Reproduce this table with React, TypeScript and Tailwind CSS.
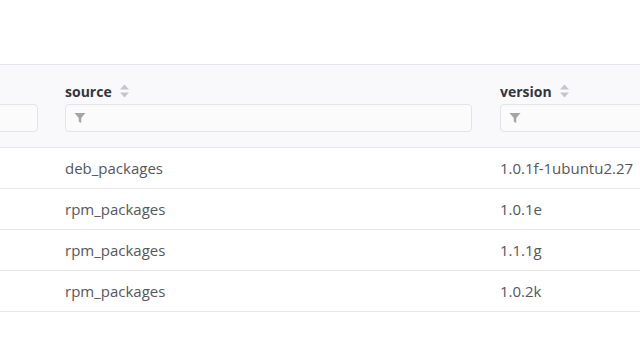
import React from "react";

type Row = {
  source: string;
  version: string;
};

const rows: Row[] = [
  { source: "deb_packages", version: "1.0.1f-1ubuntu2.27" },
  { source: "rpm_packages", version: "1.0.1e" },
  { source: "rpm_packages", version: "1.1.1g" },
  { source: "rpm_packages", version: "1.0.2k" },
];

const SortIcon = () => (
  <svg width="11" height="14" viewBox="0 0 11 14" className="ml-[7px]">
    <path d="M5.5 0.5 L10 5.5 H1 Z" fill="#c4c6cc" />
    <path d="M5.5 13.5 L10 8.5 H1 Z" fill="#c4c6cc" />
  </svg>
);

const FilterIcon = () => (
  <svg width="12" height="12" viewBox="0 0 12 12">
    <path d="M0.5 1 H11.5 L7.2 6 V11 L4.8 9.8 V6 Z" fill="#a3a5ab" />
  </svg>
);

const FilterBox = ({ className }: { className?: string }) => (
  <div className={"h-[28px] rounded-[4px] border border-[#e3e4e8] bg-[#fbfbfc] flex items-center pl-[8px] " + (className ?? "")}>
    <FilterIcon />
  </div>
);

const App = () => {
  return (
    <div className="w-[640px] h-[360px] bg-white overflow-hidden font-['Open_Sans','Lato',sans-serif]">
      <div className="h-[64px]" />
      <div className="border-t border-[#e6e7ea]">
        <div className="grid grid-cols-[51px_435px_1fr] bg-[#f9f9fb] h-[83px] border-b border-[#e6e7ea]">
          <div className="pr-[13px] pt-[39px]">
            <div className="h-[28px] -ml-[10px] rounded-[4px] border border-[#e3e4e8] bg-[#fbfbfc]" />
          </div>
          <div className="px-[14px] pt-[16px]">
            <div className="flex items-center h-[20px] mb-[3px]">
              <span className="text-[14px] font-bold text-[#34363b]">source</span>
              <SortIcon />
            </div>
            <FilterBox />
          </div>
          <div className="pl-[14px] pt-[16px]">
            <div className="flex items-center h-[20px] mb-[3px]">
              <span className="text-[14px] font-bold text-[#34363b]">version</span>
              <SortIcon />
            </div>
            <FilterBox className="w-[200px]" />
          </div>
        </div>
        {rows.map((row, i) => (
          <div key={i} className="grid grid-cols-[51px_435px_1fr] h-[41px] items-center border-b border-[#e6e7ea] text-[15px] text-[#55575c]">
            <div />
            <div className="px-[14px]">{row.source}</div>
            <div className="pl-[14px] whitespace-nowrap">{row.version}</div>
          </div>
        ))}
      </div>
    </div>
  );
};

export default App;
